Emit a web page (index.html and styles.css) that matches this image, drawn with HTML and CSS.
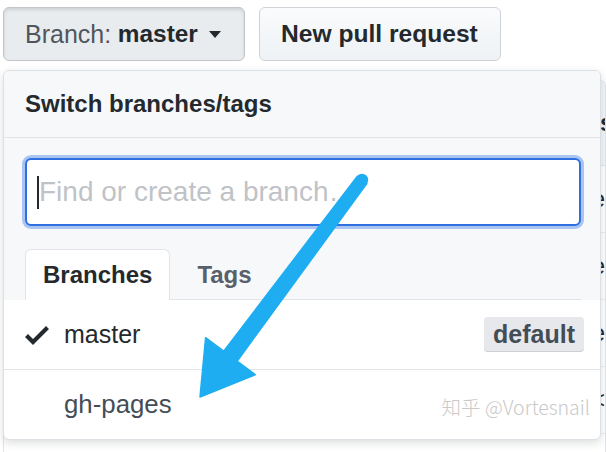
FILE: index.html
```html
<!DOCTYPE html>
<html lang="en">
<head>
    <meta charset="UTF-8">
    <meta name="viewport" content="width=device-width, initial-scale=1.0">
    <title>Switch branches</title>
    <link rel="stylesheet" href="styles.css">
</head>
<body>

    <div class="toolbar">
        <!-- Branch selector with its open menu -->
        <div class="branch-select">
            <button class="btn btn-branch">
                <span class="btn-label">Branch:</span>&nbsp;<b>master</b>
                <span class="dropdown-caret"></span>
            </button>

            <div class="select-menu">
                <div class="select-menu-header">Switch branches/tags</div>

                <div class="select-menu-filters">
                    <div class="filter-input">
                        <span class="text-caret"></span>
                        <span class="placeholder">Find or create a branch…</span>
                    </div>
                    <div class="select-menu-tabs">
                        <span class="tab selected">Branches</span>
                        <span class="tab">Tags</span>
                    </div>
                </div>

                <div class="select-menu-list">
                    <div class="select-menu-item">
                        <svg class="check" viewBox="0 0 12 16" width="24" height="32">
                            <path d="M12 5l-8 8-4-4 1.5-1.5L4 10l6.5-6.5L12 5z"/>
                        </svg>
                        <span class="item-name">master</span>
                        <span class="label">default</span>
                    </div>
                    <div class="select-menu-item">
                        <span class="check-space"></span>
                        <span class="item-name">gh-pages</span>
                    </div>
                </div>
            </div>
        </div>

        <button class="btn btn-new">New pull request</button>
    </div>

    <!-- File list behind the menu -->
    <div class="file-wrap">
        <div class="commit-tease"><span class="msg">s</span></div>
        <div class="file-row"><span class="file-icon"></span><span class="file-name">.github</span><span class="msg">re</span></div>
        <div class="file-row"><span class="file-icon"></span><span class="file-name">docs</span><span class="msg">re</span></div>
        <div class="file-row"><span class="file-icon"></span><span class="file-name">src</span><span class="msg">re</span></div>
        <div class="file-row"><span class="file-icon"></span><span class="file-name">test</span><span class="msg">&lt;</span></div>
        <div class="file-row"><span class="file-icon"></span></div>
    </div>

    <!-- Annotation arrow -->
    <svg class="arrow" width="606" height="452" viewBox="0 0 606 452">
        <circle cx="362" cy="180" r="6.2"/>
        <polygon points="357.2,176.4 223.7,351.2 205.6,337.7 200,397 255.2,374.7 237.1,361.2 366.8,183.6"/>
    </svg>

    <div class="watermark">知乎 @Vortesnail</div>

</body>
</html>
```

FILE: styles.css
```css
body {
    margin: 0;
    width: 606px;
    height: 452px;
    overflow: hidden;
    position: relative;
    font-family: "Liberation Sans", Arial, sans-serif;
    color: #24292e;
    background-color: #fff;
}

/* Top buttons */
.toolbar {
    display: flex;
    gap: 14px;
    padding: 7px 0 0 3px;
}

.btn {
    height: 54px;
    box-sizing: border-box;
    display: flex;
    align-items: center;
    padding: 0 21px;
    font-family: inherit;
    font-size: 24px;
    font-weight: bold;
    color: #24292e;
    border: 1px solid #cfd3d7;
    border-radius: 6px;
    background: linear-gradient(#fafbfc, #eff3f6 90%);
}

.btn-new {
    width: 242px;
    font-size: 24.6px;
}

.btn-branch {
    width: 242px;
    font-weight: normal;
    background: #e9ecef;
    border-color: #c2c6ca;
    box-shadow: inset 0 2px 3px rgba(27, 31, 35, 0.12);
}

.btn-branch b {
    font-size: 24.4px;
}

.btn-label {
    color: #50565c;
    font-size: 25px;
}

.dropdown-caret {
    margin-left: 11px;
    border-top: 7px solid #24292e;
    border-left: 6px solid transparent;
    border-right: 6px solid transparent;
}

.branch-select {
    position: relative;
}

/* Dropdown menu, lies over the file list */
.select-menu {
    position: absolute;
    top: 63px;
    left: 0;
    z-index: 2;
    width: 598px;
    box-sizing: border-box;
    border: 1px solid #dcdfe3;
    border-radius: 6px;
    background-color: #fff;
    box-shadow: 0 3px 8px rgba(27, 31, 35, 0.15);
    overflow: hidden;
}

.select-menu-header {
    height: 66px;
    display: flex;
    align-items: center;
    padding-left: 21px;
    font-size: 24px;
    font-weight: bold;
    background-color: #f6f8fa;
    border-bottom: 1px solid #e1e4e8;
}

.select-menu-filters {
    background-color: #f6f8fa;
    padding: 20px 19px 0 21px;
}

.filter-input {
    height: 68px;
    box-sizing: border-box;
    display: flex;
    align-items: center;
    padding-left: 10px;
    border: 2px solid #2f6fdf;
    border-radius: 6px;
    background-color: #fff;
    box-shadow: 0 0 0 3px #a9c5f1;
}

.text-caret {
    width: 2px;
    height: 33px;
    background-color: #24292e;
}

.placeholder {
    font-size: 28px;
    color: #bfc3c7;
    white-space: nowrap;
}

.select-menu-tabs {
    display: flex;
    gap: 9px;
    margin-top: 23px;
    border-bottom: 1px solid #e1e4e8;
}

.tab {
    height: 49px;
    display: flex;
    align-items: center;
    padding: 0 17px;
    font-size: 24px;
    font-weight: bold;
    color: #586069;
    border: 1px solid transparent;
    border-bottom: 0;
    border-radius: 6px 6px 0 0;
    margin-bottom: -1px;
}

.tab.selected {
    color: #24292e;
    background-color: #fff;
    border-color: #e1e4e8;
    height: 50px;
}

.select-menu-item {
    height: 69px;
    display: flex;
    align-items: center;
    padding: 0 16px 0 21px;
    font-size: 25px;
    color: #24292e;
}

.select-menu-item + .select-menu-item {
    border-top: 1px solid #e1e4e8;
    color: #444d56;
    font-size: 25.8px;
}

.check {
    fill: #24292e;
    margin-right: 15px;
}

.check-space {
    width: 24px;
    margin-right: 15px;
}

.label {
    margin-left: auto;
    height: 35px;
    display: flex;
    align-items: center;
    padding: 0 9px;
    font-weight: bold;
    color: #444d56;
    background-color: #e6e8eb;
    border-radius: 4px;
    box-shadow: inset 0 -1px 0 rgba(27, 31, 35, 0.12);
}

/* File list under the menu */
.file-wrap {
    margin: 19px 0 0 3px;
    height: 372px;
    box-sizing: border-box;
    border: 1px solid #e1e4e8;
    border-bottom: 0;
    border-radius: 6px 6px 0 0;
    overflow: hidden;
}

.commit-tease {
    height: 84px;
    display: flex;
    align-items: center;
    padding-left: 596px;
    background-color: #f1f6fb;
    border-bottom: 1px solid #e1e4e8;
    font-size: 24px;
    font-weight: bold;
}

.file-row {
    height: 66px;
    display: flex;
    align-items: center;
    padding-left: 22px;
    font-size: 24px;
    border-bottom: 1px solid #eaecef;
}

.file-icon {
    width: 15px;
    height: 30px;
    margin-right: 9px;
    border-radius: 2px;
    background-color: #6a7785;
}

.file-name {
    width: 546px;
    color: #0366d6;
}

.msg {
    color: #24292e;
    white-space: nowrap;
}

/* Annotation overlays */
.arrow {
    position: absolute;
    top: 0;
    left: 0;
    z-index: 5;
    fill: #1fadf2;
    pointer-events: none;
}

.arrow polygon {
    stroke: #1fadf2;
    stroke-width: 1.5;
    stroke-linejoin: round;
}

.watermark {
    position: absolute;
    top: 392px;
    right: 16px;
    z-index: 4;
    font-family: "Noto Sans CJK SC", "Liberation Sans", sans-serif;
    font-size: 19.5px;
    font-weight: 300;
    color: #c9c9c9;
}
```
